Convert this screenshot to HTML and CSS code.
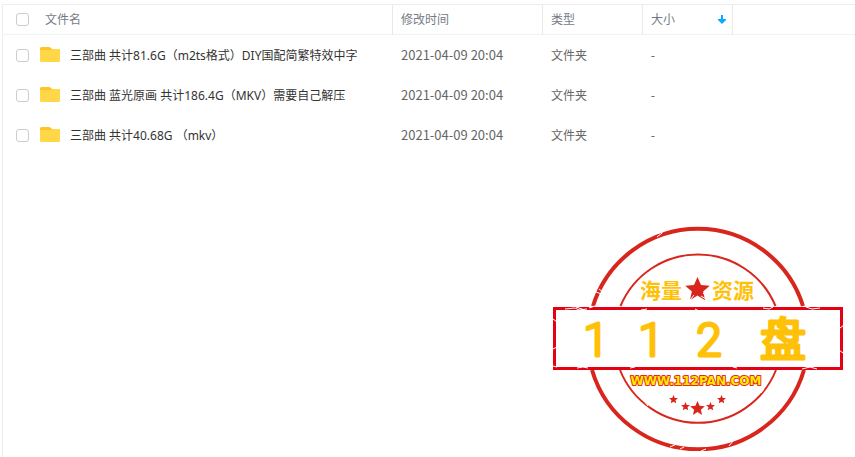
FILE: index.html
```html
<!DOCTYPE html>
<html lang="zh-CN">
<head>
    <meta charset="UTF-8">
    <meta name="viewport" content="width=device-width, initial-scale=1.0">
    <title>文件列表</title>
    <link rel="stylesheet" href="styles.css">
</head>
<body>
    <svg class="sprite" width="0" height="0" aria-hidden="true">
        <symbol id="folder" viewBox="0 0 20 15">
            <path d="M0 12V1.5Q0 0 1.500 0H9Q10 0 10.700.7L12 2H18.500Q20 2 20 3.500V12Z" fill="#ffc423"/>
            <path d="M0 3H11L13 2H18.500Q20 2 20 3.500V13.500Q20 15 18.500 15H1.500Q0 15 0 13.500Z" fill="#ffd748"/>
        </symbol>
        <symbol id="star" viewBox="-10 -10 20 20">
            <path d="M0-10 2.800-3.600 9.800-3.100 4.500 1.500 6.100 8.500 0 4.800-6.100 8.500-4.500 1.500-9.800-3.100-2.800-3.600Z" fill="#d9261c"/>
        </symbol>
    </svg>

    <main class="panel">
        <table class="files">
            <colgroup>
                <col class="col-name">
                <col class="col-time">
                <col class="col-type">
                <col class="col-size">
                <col class="col-rest">
            </colgroup>
            <thead>
                <tr>
                    <th>
                        <label class="name">
                            <input type="checkbox" class="check" aria-label="全选">
                            <span>文件名</span>
                        </label>
                    </th>
                    <th>修改时间</th>
                    <th>类型</th>
                    <th class="sorted">
                        <button type="button" class="sort">
                            <span>大小</span>
                            <svg width="8" height="9" viewBox="0 0 8 9" aria-hidden="true"><path d="M3 0H5V4H8V5L4 9 0 5V4H3Z" fill="#09aaff"/></svg>
                        </button>
                    </th>
                    <th></th>
                </tr>
            </thead>
            <tbody>
                <tr>
                    <td>
                        <label class="name">
                            <input type="checkbox" class="check">
                            <svg class="folder" width="20" height="15"><use href="#folder"/></svg>
                            <span class="text">三部曲 共计81.6G（m2ts格式）DIY国配简繁特效中字</span>
                        </label>
                    </td>
                    <td class="time">2021-04-09 20:04</td>
                    <td><span class="text">文件夹</span></td>
                    <td><span class="text">-</span></td>
                    <td></td>
                </tr>
                <tr>
                    <td>
                        <label class="name">
                            <input type="checkbox" class="check">
                            <svg class="folder" width="20" height="15"><use href="#folder"/></svg>
                            <span class="text">三部曲 蓝光原画 共计186.4G（MKV）需要自己解压</span>
                        </label>
                    </td>
                    <td class="time">2021-04-09 20:04</td>
                    <td><span class="text">文件夹</span></td>
                    <td><span class="text">-</span></td>
                    <td></td>
                </tr>
                <tr>
                    <td>
                        <label class="name">
                            <input type="checkbox" class="check">
                            <svg class="folder" width="20" height="15"><use href="#folder"/></svg>
                            <span class="text">三部曲 共计40.68G （mkv）</span>
                        </label>
                    </td>
                    <td class="time">2021-04-09 20:04</td>
                    <td><span class="text">文件夹</span></td>
                    <td><span class="text">-</span></td>
                    <td></td>
                </tr>
            </tbody>
        </table>
    </main>

    <!-- stamp -->
    <svg class="stamp" width="290" height="226" viewBox="553 225 290 226">
        <g fill="none" stroke="#d9261c">
            <path stroke-width="4" d="M593 306A110 110 0 0 1 803 306M592 370A110.500 110.500 0 0 0 804 370"/>
            <path stroke-width="2" d="M620.500 306A84 84 0 0 1 775.500 306M620 370A84 84 0 0 0 776 370"/>
        </g>
        <rect x="554.500" y="308.500" width="287" height="60" fill="#fff" stroke="#e60012" stroke-width="3"/>
        <!-- worn spots -->
        <g fill="none" stroke="#fff">
            <path d="M594 291l7 3M599 289l4 3M657 237l5-4M658 233l5-1M670 447l9-4M680 449l4-2M729 446l4-5M701 451l5-2M764 389l-3 4M645 402l3 4"/>
            <path d="M565 309l10-1 4 2 8-1M576 307l9 3M589 308l6-2M641 310l6-1M763 308l6 1 4-2M806 307l6 2 8-1M577 368l6-1 5 1M733 367l4 1M802 369l8-2 7 2M630 368l5-1M553 319l4 3M553 349l4-2M840 328l4-3M839 350l4 3M553 366l4 1M695 309l4 2"/>
        </g>
        <g class="stamp-title">
            <text x="640" y="298">海量</text>
            <text x="712" y="298">资源</text>
        </g>
        <use href="#star" x="685" y="277" width="25" height="25"/>
        <path d="M690 300l4-5M701 296l5 3M703 293l3 3" stroke="#fff" fill="none"/>
        <g class="stamp-big">
            <text x="596" y="356">1</text>
            <text x="651" y="356">1</text>
            <text x="709" y="356">2</text>
            <text class="stamp-pan" x="783" y="356">盘</text>
        </g>
        <text class="stamp-url" x="696" y="385">WWW.112PAN.COM</text>
        <use href="#star" x="669" y="395" width="9" height="9"/>
        <use href="#star" x="681" y="402" width="9" height="9"/>
        <use href="#star" x="690" y="401" width="15" height="15"/>
        <use href="#star" x="706" y="402" width="9" height="9"/>
        <use href="#star" x="717" y="395" width="9" height="9"/>
    </svg>
</body>
</html>
```

FILE: styles.css
```css
* {
    box-sizing: border-box;
}

body {
    margin: 0;
    padding: 4px 0 0 2px;
    min-height: 100vh;
    display: flex;
    position: relative;
    background: #fff;
    color: #666;
    font-family: "Noto Sans", "Noto Sans CJK SC", sans-serif;
    font-size: 12px;
    line-height: 18px;
}

.sprite {
    position: absolute;
}

.panel {
    flex: 1;
    border-left: 1px solid #ededed;
    border-top: 1px solid #ededed;
}

.files {
    width: 100%;
    table-layout: fixed;
    border-collapse: separate;
    border-spacing: 0;
}

.col-time {
    width: 150px;
}

.col-type {
    width: 100px;
}

.col-size {
    width: 90px;
}

.col-rest {
    width: 123px;
}

.files th,
.files td {
    padding: 0 8px;
    text-align: left;
    font-weight: normal;
    white-space: nowrap;
}

.files th {
    height: 30px;
    color: #757b85;
    border-left: 1px solid #e9e9ec;
    border-bottom: 1px solid #f2f2f5;
}

.files td {
    height: 40px;
    padding-left: 9px;
}

.files th:first-child {
    border-left: 0;
    padding-left: 13px;
}

.files td:first-child {
    padding-left: 13px;
    color: #333;
}

.files .time {
    font-family: "Noto Sans CJK SC", sans-serif;
    font-size: 13px;
}

.files .sorted {
    padding-right: 6px;
}

.text {
    display: block;
    padding-top: 2px;
}

.name {
    display: flex;
    align-items: center;
}

.check {
    appearance: none;
    width: 13px;
    height: 13px;
    margin: 0;
    border: 1px solid #ccc;
    border-radius: 3px;
    background: #fff;
}

.check:checked {
    background: #09aaff;
}

th .check {
    margin-right: 16px;
}

.folder {
    margin: 0 10px 2px 11px;
}

.sort {
    display: flex;
    align-items: center;
    justify-content: space-between;
    width: 100%;
    padding: 0;
    border: 0;
    background: none;
    color: inherit;
    font: inherit;
    cursor: pointer;
}

.stamp {
    position: absolute;
    top: 225px;
    right: 12px;
    pointer-events: none;
}

.stamp-title {
    fill: #ffc107;
    font-family: "Noto Sans CJK SC", sans-serif;
    font-size: 21px;
    font-weight: bold;
}

.stamp-big {
    fill: #ffc107;
    stroke: #ffc107;
    stroke-width: 3px;
    stroke-linejoin: round;
    text-anchor: middle;
    font-family: Roboto, sans-serif;
    font-size: 46px;
    font-weight: 300;
}

.stamp-pan {
    font-family: "Noto Sans CJK SC", sans-serif;
    font-weight: normal;
}

.stamp-url {
    fill: #ffeb00;
    stroke: #e8281c;
    stroke-width: 2px;
    stroke-linejoin: round;
    paint-order: stroke;
    text-anchor: middle;
    font-family: "DejaVu Sans", sans-serif;
    font-size: 12px;
    font-weight: bold;
}
```
